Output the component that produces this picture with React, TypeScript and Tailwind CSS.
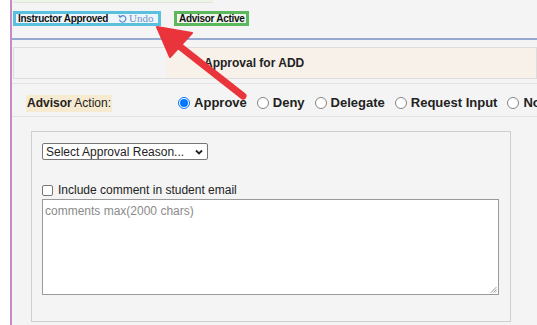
import React from "react";

const sans = { fontFamily: '"Liberation Sans", Arial, sans-serif' };

function Radio({ label, checked }: { label: string; checked?: boolean }) {
  return (
    <label className="flex shrink-0 items-center gap-[4px] whitespace-nowrap">
      {checked ? (
        <span className="flex h-[12px] w-[12px] items-center justify-center rounded-full border border-[#0075ff] bg-white">
          <span className="h-[8px] w-[8px] rounded-full bg-[#0075ff]" />
        </span>
      ) : (
        <span className="h-[12px] w-[12px] rounded-full border border-[#858585] bg-white" />
      )}
      <span className="text-[13px] font-bold text-[#222]">{label}</span>
    </label>
  );
}

function UndoIcon() {
  return (
    <svg width="9" height="9" viewBox="0 0 10 10" fill="none" stroke="#5b8bd0" strokeWidth="1.4">
      <path d="M2.2 3.2 A3.6 3.6 0 1 1 1.6 6.2" />
      <path d="M0.8 1.2 L2.2 3.6 L4.6 2.8" fill="none" />
    </svg>
  );
}

export default function App() {
  return (
    <div className="flex h-[325px] w-[537px] overflow-hidden bg-white" style={sans}>
      <div className="w-[10px] shrink-0 bg-white" />
      <div className="w-[2px] shrink-0 bg-[#c48bc8]" />
      <div className="relative flex min-w-0 flex-1 flex-col overflow-hidden bg-[#f4f4f4]">
        <div className="ml-[1px] h-[3px] w-[200px] border-b border-[#e2e2e2] bg-[#edf5e6]" />

        {/* status badges */}
        <div className="mt-[8px] flex items-center gap-[13px] whitespace-nowrap pl-[1px]">
          <div className="flex h-[15px] w-[148px] shrink-0 items-center border-[3px] border-[#5bc0de] bg-[#eef6fb] pl-[2px]">
            <span className="text-[10px] font-bold leading-none tracking-[-0.3px] text-[#111]">Instructor Approved</span>
            <span
              className="ml-[10px] flex items-center gap-[2px] text-[11px] leading-none text-[#6d93c8]"
              style={{ fontFamily: '"Liberation Serif", "Times New Roman", serif' }}
            >
              <UndoIcon />
              Undo
            </span>
          </div>
          <div className="flex h-[15px] shrink-0 items-center border-[3px] border-[#5cb85c] bg-[#eef6ee] px-[2px]">
            <span className="text-[10px] font-bold leading-none tracking-[-0.3px] text-[#111]">Advisor Active</span>
          </div>
        </div>

        <div className="mt-[12px] h-[2px] bg-[#94a8d0]" />

        {/* title box */}
        <div className="ml-[1px] mt-[7px] flex h-[32px] border border-[#dddddd]">
          <div className="w-[152px] shrink-0 bg-[#f4f4f4]" />
          <div className="flex flex-1 items-center bg-[#f7f1ea] pl-[38px]">
            <span className="whitespace-nowrap text-[12px] font-bold text-[#222]">Approval for ADD</span>
          </div>
        </div>

        {/* action row */}
        <div className="mt-[4px] flex h-[34px] items-center whitespace-nowrap border-y border-[#e3e3e3] pl-[14px] pt-[6px]">
          <span className="shrink-0 bg-[#f6ead0] px-[1px] text-[12px] leading-[17px] text-[#222]">
            <b>Advisor</b> Action:
          </span>
          <div className="ml-[66px] flex shrink-0 items-center gap-[10px]">
            <Radio label="Approve" checked />
            <Radio label="Deny" />
            <Radio label="Delegate" />
            <Radio label="Request Input" />
            <Radio label="No Action" />
          </div>
        </div>

        {/* reason box */}
        <div className="ml-[19px] mt-[14px] flex h-[191px] w-[480px] shrink-0 flex-col border border-[#cfcfcf] bg-[#f4f4f4] pl-[10px] pt-[11px]">
          <div className="flex h-[17px] w-[166px] items-center justify-between rounded-[2px] border border-[#767676] bg-white pl-[3px] pr-[4px] text-[12px] text-[#222]">
            <span className="whitespace-nowrap">Select Approval Reason...</span>
            <svg width="8" height="6" viewBox="0 0 8 6" fill="none" stroke="#222" strokeWidth="1.8">
              <path d="M1 1.5 L4 4.5 L7 1.5" />
            </svg>
          </div>
          <div className="mt-[23px] flex h-[14px] items-center gap-[5px] whitespace-nowrap text-[12px] text-[#222]">
            <span className="h-[11px] w-[11px] rounded-[2px] border border-[#767676] bg-white" />
            <span>Include comment in student email</span>
          </div>
          <div className="relative mt-[2px] h-[96px] w-[457px] border border-[#9a9a9a] bg-white px-[2px] pt-[2px] text-[12px] text-[#8a8a8a]">
            comments max(2000 chars)
            <svg className="absolute bottom-[1px] right-[1px]" width="7" height="7" viewBox="0 0 7 7" stroke="#999" strokeWidth="1">
              <path d="M6.5 1 L1 6.5 M6.5 3.5 L3.5 6.5 M6.5 5.5 L5.5 6.5" />
            </svg>
          </div>
        </div>

        {/* red annotation arrow */}
        <svg className="pointer-events-none absolute left-[-12px] top-0" width="537" height="325" viewBox="0 0 537 325">
          <line x1="243" y1="96" x2="178" y2="45" stroke="#e8343a" strokeWidth="7" strokeLinecap="round" />
          <polygon points="157,27 192,33 170,57" fill="#e8343a" strokeLinejoin="round" stroke="#e8343a" strokeWidth="2" />
        </svg>
      </div>
    </div>
  );
}
